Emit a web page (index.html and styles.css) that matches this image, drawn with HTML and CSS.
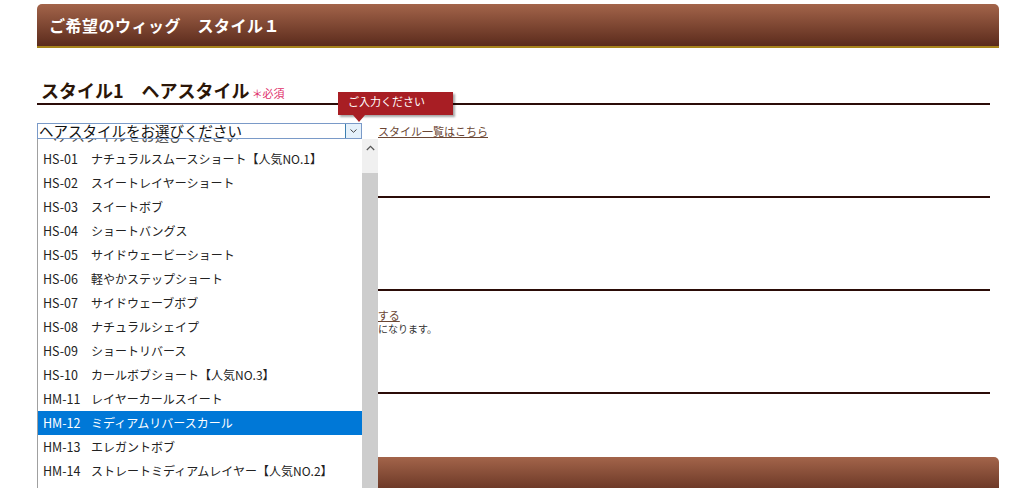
FILE: index.html
```html
<!DOCTYPE html>
<html lang="ja">
<head>
    <meta charset="UTF-8">
    <meta name="viewport" content="width=device-width, initial-scale=1.0">
    <title>ご希望のウィッグ</title>
    <link rel="stylesheet" href="styles.css">
</head>
<body>
    <div class="page">
        <h2 class="bar">ご希望のウィッグ　スタイル１</h2>

        <div class="section">
            <h3 class="sec-title first">スタイル1　ヘアスタイル<span class="req">＊必須</span></h3>
            <div class="field">
                <div class="select-wrap">
                    <div class="select">
                        <span class="select-text">ヘアスタイルをお選びください</span>
                        <span class="select-btn">
                            <svg width="7" height="4" viewBox="0 0 7 4"><path d="M0.5 0.5 L3.5 3.3 L6.5 0.5" fill="none" stroke="#444" stroke-width="1"/></svg>
                        </span>
                    </div>
                    <div class="tooltip">ご入力ください</div>
                    <div class="listbox">
                        <ul class="options">
                            <li class="ghost">ヘアスタイルをお選びください</li>
                            <li><span class="code">HS-01</span>ナチュラルスムースショート【人気NO.1】</li>
                            <li><span class="code">HS-02</span>スイートレイヤーショート</li>
                            <li><span class="code">HS-03</span>スイートボブ</li>
                            <li><span class="code">HS-04</span>ショートバングス</li>
                            <li><span class="code">HS-05</span>サイドウェービーショート</li>
                            <li><span class="code">HS-06</span>軽やかステップショート</li>
                            <li><span class="code">HS-07</span>サイドウェーブボブ</li>
                            <li><span class="code">HS-08</span>ナチュラルシェイプ</li>
                            <li><span class="code">HS-09</span>ショートリバース</li>
                            <li><span class="code">HS-10</span>カールボブショート【人気NO.3】</li>
                            <li><span class="code">HM-11</span>レイヤーカールスイート</li>
                            <li class="active"><span class="code">HM-12</span>ミディアムリバースカール</li>
                            <li><span class="code">HM-13</span>エレガントボブ</li>
                            <li><span class="code">HM-14</span>ストレートミディアムレイヤー【人気NO.2】</li>
                        </ul>
                        <div class="scrollbar">
                            <div class="sb-up">
                                <svg width="9" height="6" viewBox="0 0 9 6"><path d="M0.8 5 L4.5 1.3 L8.2 5" fill="none" stroke="#555" stroke-width="1.2"/></svg>
                            </div>
                            <div class="sb-thumb"></div>
                        </div>
                    </div>
                </div>
                <a href="#" class="link">スタイル一覧はこちら</a>
            </div>
        </div>

        <!-- sections below are mostly hidden by the open list -->
        <div class="section">
            <h3 class="sec-title"></h3>
            <div class="field"></div>
        </div>

        <div class="section">
            <h3 class="sec-title"></h3>
            <div class="opt-row">
                <span class="opt-label"></span>
                <a href="#" class="link">カラーイメージを確認する</a>
            </div>
            <div class="opt-note">
                <span class="opt-label"></span>
                <span>※仕上がりは約２週間後になります。</span>
            </div>
        </div>

        <div class="section">
            <h3 class="sec-title"></h3>
            <div class="field"></div>
        </div>

        <div class="bar next"></div>
    </div>
</body>
</html>
```

FILE: styles.css
```css
html, body {
    overflow: hidden;
}
body {
    margin: 0;
    background: #fff;
    color: #222;
    font-family: "Noto Sans CJK JP", "Noto Sans", sans-serif;
}
.page {
    padding-left: 37px;
    width: 962px;
}
.bar {
    margin: 4px 0 0;
    height: 42px;
    line-height: 42px;
    padding-left: 12px;
    border-radius: 5px 5px 0 0;
    border-bottom: 2px solid #a8841c;
    background: linear-gradient(#a3644a, #5b2b1c);
    color: #fff;
    font-size: 16px;
    font-weight: bold;
    letter-spacing: 0.5px;
}
.bar.next {
    margin-top: 29px;
}
.section {
    width: 953px;
}
.sec-title {
    margin: 31px 0 0;
    padding-left: 4px;
    height: 26px;
    line-height: 26px;
    border-bottom: 2px solid #2b0c08;
    color: #2b1608;
    font-size: 18px;
    font-weight: bold;
}
.sec-title.first {
    margin-top: 29px;
}
.req {
    margin-left: 2px;
    color: #e0306a;
    font-size: 11px;
    font-weight: normal;
}
.field {
    display: flex;
    align-items: center;
    gap: 16px;
    margin-top: 17px;
    height: 17px;
}
.select-wrap {
    position: relative;
}
.select {
    display: flex;
    width: 325px;
    height: 16px;
    box-sizing: border-box;
    border: 1px solid #7a9ac8;
    background: #fff;
}
.select-text {
    flex: 1;
    padding-left: 1px;
    font-size: 14.5px;
    line-height: 14px;
    color: #111;
    white-space: nowrap;
}
.select-btn {
    display: flex;
    align-items: center;
    justify-content: center;
    width: 15px;
    border-left: 1px solid #3c7fb1;
    background: #e5f1fb;
}
.link {
    color: #6b4633;
    font-size: 11px;
    text-decoration: underline;
}
.tooltip {
    position: absolute;
    left: 301px;
    top: -31px;
    width: 115px;
    height: 23px;
    box-sizing: border-box;
    padding: 2px 0 0 10px;
    background: #a81e24;
    color: #fff;
    font-size: 11px;
    line-height: 14px;
    white-space: nowrap;
    box-shadow: 2px 2px 2px rgba(0, 0, 0, 0.35);
    z-index: 3;
}
.tooltip::after {
    content: "";
    position: absolute;
    left: 15px;
    bottom: -7px;
    border-left: 6px solid transparent;
    border-right: 6px solid transparent;
    border-top: 7px solid #a81e24;
}
.listbox {
    position: absolute;
    top: 16px;
    left: 0;
    width: 341px;
    height: 360px;
    display: flex;
    background: #fff;
    border-left: 1px solid #a0a0a0;
    box-sizing: border-box;
    z-index: 2;
}
.options {
    flex: 1;
    margin: 0;
    padding: 0;
    list-style: none;
    overflow: hidden;
}
.options li {
    height: 24px;
    line-height: 24px;
    padding-left: 5px;
    font-size: 12px;
    color: #222;
    white-space: nowrap;
}
.options li.ghost {
    margin-top: -16px;
    color: #555;
    font-size: 14px;
}
.options li.active {
    background: #0078d7;
    color: #fff;
}
.code {
    display: inline-block;
    width: 48px;
    font-size: 12.5px;
}
.scrollbar {
    width: 16px;
    display: flex;
    flex-direction: column;
    background: #f0f0f0;
}
.sb-up {
    height: 18px;
    display: flex;
    align-items: center;
    justify-content: center;
}
.sb-thumb {
    margin-top: 16px;
    flex: 1;
    background: #cdcdcd;
}
.opt-row, .opt-note {
    display: flex;
}
.opt-row {
    margin-top: 17px;
    height: 15px;
    line-height: 15px;
}
.opt-note {
    height: 12px;
    line-height: 12px;
    font-size: 10px;
    color: #333;
}
.opt-label {
    width: 231px;
    font-size: 11px;
}
.opt-note + .sec-title {
    margin-top: 33px;
}
```
